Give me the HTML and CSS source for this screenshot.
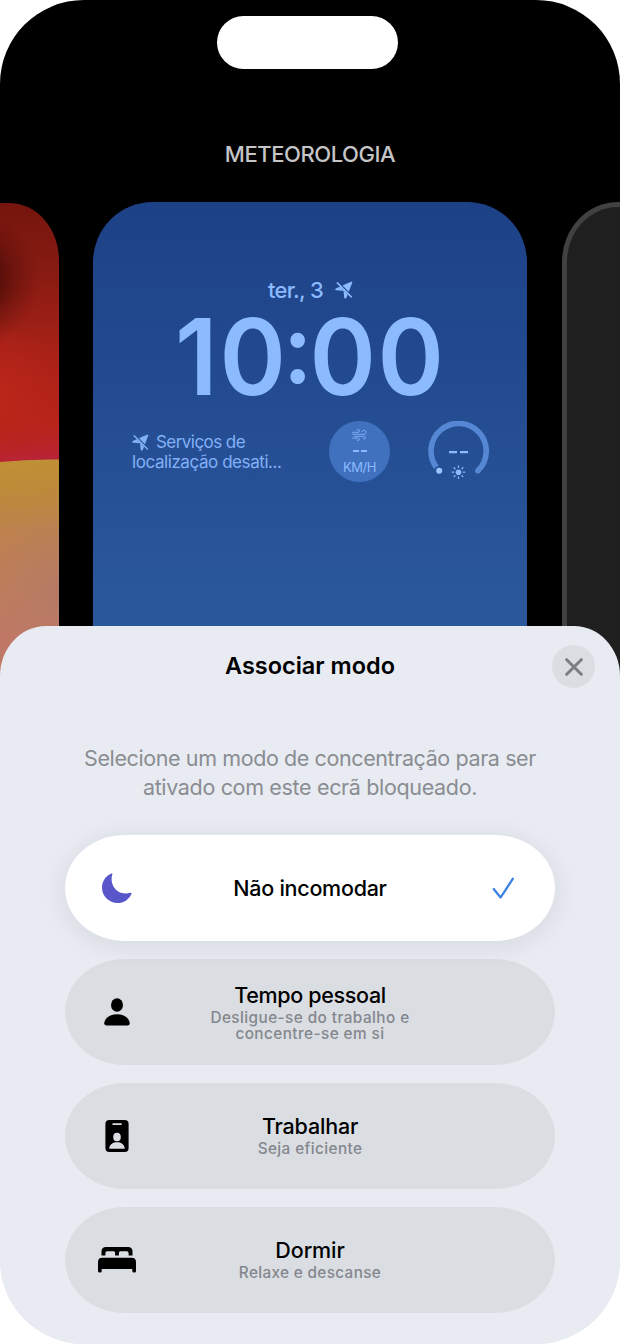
FILE: index.html
```html
<!DOCTYPE html>
<html lang="pt-PT">
<head>
<meta charset="utf-8">
<title>Associar modo</title>
<link rel="stylesheet" href="styles.css">
</head>
<body>
<svg class="defs" width="0" height="0" aria-hidden="true">
  <defs>
    <mask id="slash-gap">
      <rect width="18" height="18" fill="#fff"/>
      <path d="M1.600.400 17.500 16.300" stroke="#000" stroke-width="2.600"/>
    </mask>
    <symbol id="location-off" viewBox="0 0 18 18">
      <path mask="url(#slash-gap)" d="M16.200.700Q17.700.200 17.200 1.700L11.500 16.700Q10.300 18.500 9.200 16.700L8.600 10.400Q8.500 9.900 7.900 9.800L1 9.200Q-.6 8.500.8 7.400L12 2.400Z" fill="currentColor"/>
      <path d="M2.300 1.900 16.300 15.900" stroke="currentColor" stroke-width="1.500" stroke-linecap="round"/>
    </symbol>
  </defs>
</svg>
<main class="phone">
  <div class="island"></div>
  <h1 class="screen-name">METEOROLOGIA</h1>
  <section class="gallery">
    <div class="wallpaper wallpaper-sunset">
      <svg width="59" height="500" viewBox="0 0 59 500">
        <defs>
          <linearGradient id="red" x1="0" y1="0" x2="0" y2="260" gradientUnits="userSpaceOnUse">
            <stop offset="0" stop-color="#75150d"/><stop offset=".25" stop-color="#861b12"/><stop offset=".55" stop-color="#a62117"/><stop offset=".84" stop-color="#b72419"/><stop offset=".94" stop-color="#b8242b"/><stop offset="1" stop-color="#b8243b"/>
          </linearGradient>
          <radialGradient id="dark" cx="-30" cy="75" r="72" gradientUnits="userSpaceOnUse">
            <stop offset="0" stop-color="#420906"/><stop offset=".4" stop-color="#4a0b07" stop-opacity=".8"/><stop offset="1" stop-color="#6b130c" stop-opacity="0"/>
          </radialGradient>
          <radialGradient id="glow" cx="-5" cy="195" r="75" gradientUnits="userSpaceOnUse">
            <stop offset="0" stop-color="#bd271a" stop-opacity=".9"/><stop offset=".4" stop-color="#bb261a" stop-opacity=".6"/><stop offset="1" stop-color="#b82418" stop-opacity="0"/>
          </radialGradient>
          <linearGradient id="sand" x1="0" y1="257" x2="14" y2="430" gradientUnits="userSpaceOnUse">
            <stop offset="0" stop-color="#bf9135"/><stop offset=".15" stop-color="#bd8b37"/><stop offset=".4" stop-color="#bd824c"/><stop offset=".75" stop-color="#bf7d5b"/><stop offset="1" stop-color="#bf7865"/>
          </linearGradient>
          <radialGradient id="sand-side" cx="62" cy="385" r="80" gradientUnits="userSpaceOnUse">
            <stop offset="0" stop-color="#ae7868" stop-opacity=".7"/><stop offset="1" stop-color="#b87e68" stop-opacity="0"/>
          </radialGradient>
        </defs>
        <rect width="59" height="500" fill="url(#red)"/>
        <rect width="59" height="260" fill="url(#glow)"/>
        <rect width="59" height="260" fill="url(#dark)"/>
        <path d="M0 259Q28 256 59 256.500V500H0Z" fill="url(#sand)"/>
        <path d="M0 290H59V500H0Z" fill="url(#sand-side)"/>
      </svg>
    </div>
    <article class="wallpaper lock-screen">
      <div class="date"><span class="day">ter., 3</span><svg width="18" height="18"><use href="#location-off"/></svg></div>
      <div class="clock"><span class="one">1</span>0<span class="colon">:</span><span class="minutes">0</span>0</div>
      <div class="widgets">
        <div class="weather-text">
          <div class="weather-line"><svg width="17" height="17"><use href="#location-off"/></svg><span class="weather-first">Serviços de</span></div>
          <div class="weather-second">localização desati...</div>
        </div>
        <div class="wind">
          <svg width="15" height="12" viewBox="0 0 15 12" fill="none" stroke="currentColor" stroke-width=".9" stroke-linecap="round">
            <path d="M.6 3.300H6.100A1.400 1.400 0 1 0 4.900 1.500M.6 5.300H12A2 2 0 1 0 10.200 2.700M2.500 7.300H12.200A1.300 1.300 0 1 1 11 9.100M.6 9H6A1.300 1.300 0 1 1 4.900 10.800"/>
          </svg>
          <span class="dashes"><i></i><i></i></span>
          <span class="unit">KM/H</span>
        </div>
        <svg class="gauge" width="61" height="61" viewBox="0 0 61 61">
          <path d="M8.500 46.500A27.600 27.600 0 1 1 49.900 49.800" fill="none" stroke="#5587d4" stroke-width="5.600"/>
          <circle cx="49.900" cy="49.800" r="2.800" fill="#5587d4"/>
          <circle cx="11.200" cy="49.700" r="4.800" fill="#27509a"/>
          <circle cx="11.200" cy="49.700" r="3" fill="#9bc6ff"/>
          <path d="M21 31.200H29M32 31.200H40" stroke="#8bbaff" stroke-width="2.300"/>
          <circle cx="30.500" cy="51.200" r="2.800" fill="#8bbaff"/>
          <path d="M30.500 45V46.300M30.500 56.100V57.400M24.300 51.200H25.600M35.400 51.200H36.700M26.100 46.800 27 47.700M34 54.700 34.900 55.600M26.100 55.600 27 54.700M34 47.700 34.900 46.800" stroke="#8bbaff" stroke-width="1.300" stroke-linecap="round"/>
        </svg>
      </div>
    </article>
    <div class="wallpaper wallpaper-dark"></div>
  </section>

  <section class="sheet">
    <header class="sheet-header">
      <h2 class="sheet-title">Associar modo</h2>
      <button class="close" aria-label="Fechar">
        <svg width="18" height="18" viewBox="0 0 18 18"><path d="M1.700 1.700 16.300 16.300M16.300 1.700 1.700 16.300" stroke="#7c7e83" stroke-width="3" stroke-linecap="round"/></svg>
      </button>
    </header>
    <p class="intro"><span class="intro-a">Selecione um modo de concentração para ser</span><br><span class="intro-b">ativado com este ecrã bloqueado.</span></p>
    <div class="modes">
      <button class="mode mode-selected">
        <span class="mode-icon"><svg width="32" height="32" viewBox="0 0 32 32"><path d="M10.500 1.600Q11.700 1.100 11.300 2.400C8.200 12.200 15.700 24.200 29.200 20.800Q31.200 20.200 30.300 22.200C27.800 27.500 22.700 31 16.700 31 8 31 1 24.200 1 15.800 1 9.200 4.800 3.800 10.500 1.600Z" fill="#5856c9"/></svg></span>
        <span class="mode-text"><span class="mode-name n1">Não incomodar</span></span>
        <span class="mode-check"><svg width="22" height="22" viewBox="0 0 22 22"><path d="M1.700 12 8.600 20.500 20.900 1.700" fill="none" stroke="#397fe3" stroke-width="2.200" stroke-linecap="round" stroke-linejoin="round"/></svg></span>
      </button>
      <button class="mode">
        <span class="mode-icon"><svg width="26" height="28" viewBox="0 0 26 28"><ellipse cx="13" cy="7" rx="6" ry="6.700"/><path d="M2.500 27.500C1 27.500.3 26.600.3 25.300.3 20.700 5.500 16.200 13 16.200S25.700 20.700 25.700 25.300C25.700 26.600 25 27.500 23.500 27.500Z"/></svg></span>
        <span class="mode-text two-lines"><span class="mode-name n2">Tempo pessoal</span><span class="mode-sub s2">Desligue-se do trabalho e<br>concentre-se em si</span></span>
      </button>
      <button class="mode">
        <span class="mode-icon"><svg width="24" height="32" viewBox="0 0 24 32"><rect x=".4" width="23.200" height="32" rx="4"/><rect x="7.300" y="3.200" width="9.600" height="1.800" rx=".9" fill="#dadde2"/><ellipse cx="12" cy="17" rx="3.800" ry="4.300" fill="#dadde2"/><path d="M4.700 28.800Q4 28.800 4.200 28C5 24.300 8 22.300 12 22.300S19 24.300 19.800 28Q20 28.800 19.300 28.800Z" fill="#dadde2"/></svg></span>
        <span class="mode-text one-line"><span class="mode-name n3">Trabalhar</span><span class="mode-sub s3">Seja eficiente</span></span>
      </button>
      <button class="mode">
        <span class="mode-icon"><svg width="38" height="26" viewBox="0 0 38 26"><path d="M3.500 8.500V4.500Q3.500 0 8 0H30Q34.500 0 34.500 4.500V8.500H30.600V6Q30.600 4.200 28.800 4.200H22.400Q20.900 4.200 20.900 5.700V8.500H17.100V5.700Q17.100 4.200 15.600 4.200H9.200Q7.400 4.200 7.400 6V8.500Z"/><path d="M0 15Q0 10.700 4.300 10.700H33.700Q38 10.700 38 15V24Q38 25.500 36.500 25.500H35.800Q34.300 25.500 34.300 24V22H3.700V24Q3.700 25.500 2.200 25.500H1.500Q0 25.500 0 24Z"/></svg></span>
        <span class="mode-text one-line"><span class="mode-name n4">Dormir</span><span class="mode-sub s4">Relaxe e descanse</span></span>
      </button>
    </div>
  </section>
</main>
</body>
</html>
```
FILE: styles.css
```css
* { box-sizing: border-box; margin: 0; }
body { background: #fff; font-family: Inter, "Liberation Sans", sans-serif; }
button { border: 0; padding: 0; font: inherit; color: inherit; }
svg { display: block; flex: none; }
.defs { position: absolute; }

.phone { width: 620px; height: 1344px; padding-top: 16px; background: linear-gradient(#000 1000px, #e8ebf1 0); border-radius: 84px; overflow: hidden; }
.island { width: 181px; height: 53px; margin-left: 217px; border-radius: 27px; background: #fff; }
.screen-name { margin-top: 71px; text-align: center; font-size: 22px; line-height: 28px; font-weight: 500; letter-spacing: -.45px; color: #c5c5c7; }

.gallery { display: flex; height: 500px; margin-top: 34px; }
.wallpaper { flex: none; overflow: hidden; }
.wallpaper-sunset { width: 59px; margin-top: 1px; border-radius: 0 50px 0 0 / 0 57px 0 0; }
.wallpaper-dark { width: 58px; margin-left: 35px; border: 5px solid #414141; border-right: 0; border-radius: 56px 0 0 0 / 60px 0 0 0; background: #1f1f1f; }

.lock-screen { width: 434px; margin-left: 34px; padding: 74px 38px 0 39px; border-radius: 60px; background: linear-gradient(#1d4187, #2b589d 424px); color: #8bbaff; }
.date { display: flex; justify-content: center; align-items: center; gap: 12px; height: 28px; font-size: 22px; line-height: 28px; font-weight: 500; }
.day { letter-spacing: -.7px; }
.clock { display: flex; justify-content: center; margin: 8px 4px 0 -1px; font-size: 106px; line-height: 90px; font-weight: 600; letter-spacing: -3px; white-space: nowrap; transform: scaleX(.95); }
.one { letter-spacing: 2px; }
.colon { font-size: 97px; transform: translateY(-9px); }
.minutes { letter-spacing: 1.500px; }
.widgets { display: flex; align-items: center; height: 61px; margin-top: 19px; }
.weather-text { width: 197px; padding-top: 1px; font-size: 17px; line-height: 20px; white-space: nowrap; color: #82b1f8; }
.weather-line { display: flex; align-items: center; gap: 7px; }
.weather-first { letter-spacing: -.55px; }
.weather-second { letter-spacing: -.43px; }
.wind { display: flex; flex-direction: column; align-items: center; width: 61px; height: 61px; padding-top: 8px; border-radius: 50%; background: #4071be; }
.wind svg { color: #82b1f8; }
.dashes { display: flex; gap: 2px; margin-top: 9px; }
.dashes i { width: 6px; height: 2px; background: #8bbaff; }
.unit { margin-top: 7px; font-size: 13px; line-height: 16px; letter-spacing: -.4px; }
.gauge { margin-left: 38px; }

.sheet { position: relative; height: 718px; margin-top: -76px; border-radius: 46px 46px 0 0 / 50px 50px 0 0; background: #e8ebf1; }
.sheet-header { display: grid; grid-template-columns: 68px 1fr 68px; align-items: start; height: 118px; padding-top: 19px; }
.sheet-title { grid-column: 2; padding-top: 7px; text-align: center; font-size: 23.500px; line-height: 28px; font-weight: 600; }
.close { display: grid; place-items: center; width: 43px; height: 43px; border-radius: 50%; background: #dadde2; }
.intro { text-align: center; font-size: 21.500px; line-height: 29px; color: #8a8d92; white-space: nowrap; }
.intro-a { letter-spacing: -.4px; }
.intro-b { letter-spacing: -.34px; }
.modes { display: grid; gap: 18px; width: 490px; margin: 33px auto 0; }
.mode { display: grid; grid-template-columns: 104px 1fr 104px; align-items: center; height: 106px; border-radius: 60px / 53px; background: #dadde2; color: #000; }
.mode-selected { position: relative; background: #fff; box-shadow: 0 4px 26px #20283418; }
.mode-icon, .mode-check { display: grid; place-items: center; }
.mode-text { display: flex; flex-direction: column; text-align: center; white-space: nowrap; }
.two-lines { padding-bottom: 1px; }
.one-line { padding-bottom: 3px; }
.mode-name { font-size: 21.500px; line-height: 28px; font-weight: 500; }
.n1 { letter-spacing: -.27px; }
.n2 { letter-spacing: -.33px; }
.n3 { letter-spacing: -.2px; }
.n4 { letter-spacing: -.1px; }
.mode-sub { padding-top: 1px; font-size: 15.300px; line-height: 16px; font-weight: 500; color: #84878d; }
.s2 { letter-spacing: .44px; }
.s3 { letter-spacing: .4px; }
.s4 { letter-spacing: .35px; }
```
